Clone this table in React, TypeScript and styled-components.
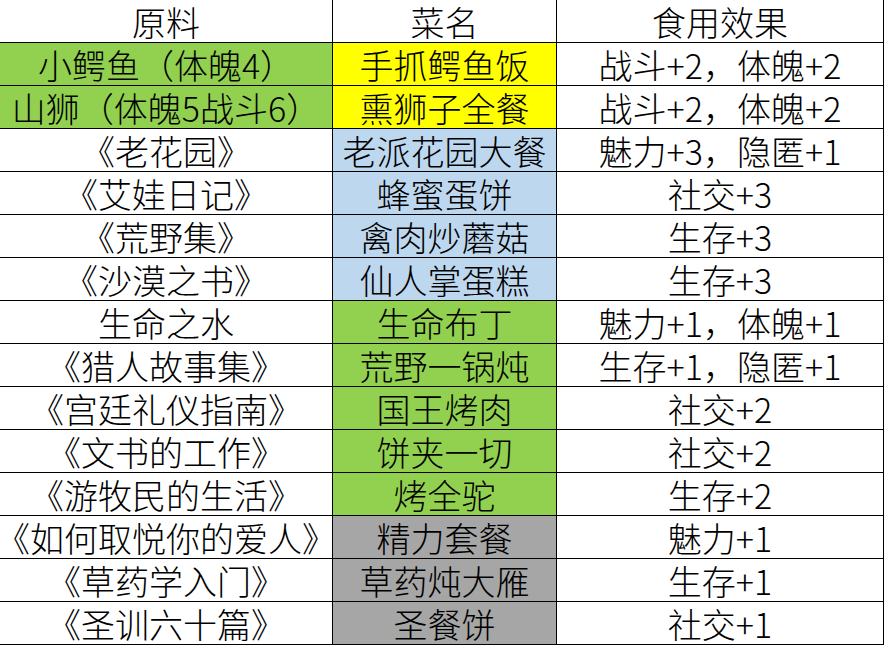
import styled, { createGlobalStyle } from "styled-components";

const GlobalStyle = createGlobalStyle`
  html, body {
    margin: 0;
    padding: 0;
    background: #fff;
    overflow: hidden;
  }
`;

type Tone = "none" | "green" | "yellow" | "blue" | "gray";

const tones: Record<Tone, string> = {
  none: "#ffffff",
  green: "#92d050",
  yellow: "#ffff00",
  blue: "#bdd7ee",
  gray: "#a6a6a6",
};

const Sheet = styled.div`
  display: grid;
  grid-template-columns: 333px 224px 327px;
  grid-auto-rows: 43px;
  width: 884px;
  font-family: "Noto Sans CJK SC", "Noto Sans", sans-serif;
  font-size: 34px;
  font-weight: 300;
  color: #000;
`;

const Cell = styled.div<{ $tone?: Tone }>`
  box-sizing: border-box;
  display: flex;
  align-items: center;
  justify-content: center;
  padding-top: 2px;
  white-space: nowrap;
  border-right: 1px solid #000;
  border-bottom: 1px solid #000;
  background: ${(p) => tones[p.$tone ?? "none"]};
  line-height: 1;
`;

const rows: [string, Tone, string, Tone, string][] = [
  ["小鳄鱼（体魄4）", "green", "手抓鳄鱼饭", "yellow", "战斗+2，体魄+2"],
  ["山狮（体魄5战斗6）", "green", "熏狮子全餐", "yellow", "战斗+2，体魄+2"],
  ["《老花园》", "none", "老派花园大餐", "blue", "魅力+3，隐匿+1"],
  ["《艾娃日记》", "none", "蜂蜜蛋饼", "blue", "社交+3"],
  ["《荒野集》", "none", "禽肉炒蘑菇", "blue", "生存+3"],
  ["《沙漠之书》", "none", "仙人掌蛋糕", "blue", "生存+3"],
  ["生命之水", "none", "生命布丁", "green", "魅力+1，体魄+1"],
  ["《猎人故事集》", "none", "荒野一锅炖", "green", "生存+1，隐匿+1"],
  ["《宫廷礼仪指南》", "none", "国王烤肉", "green", "社交+2"],
  ["《文书的工作》", "none", "饼夹一切", "green", "社交+2"],
  ["《游牧民的生活》", "none", "烤全驼", "green", "生存+2"],
  ["《如何取悦你的爱人》", "none", "精力套餐", "gray", "魅力+1"],
  ["《草药学入门》", "none", "草药炖大雁", "gray", "生存+1"],
  ["《圣训六十篇》", "none", "圣餐饼", "gray", "社交+1"],
];

export default function App() {
  return (
    <>
      <GlobalStyle />
      <Sheet>
        <Cell>原料</Cell>
        <Cell>菜名</Cell>
        <Cell>食用效果</Cell>
        {rows.map(([source, sourceTone, dish, dishTone, effect], i) => (
          <>
            <Cell key={`s${i}`} $tone={sourceTone}>
              {source}
            </Cell>
            <Cell key={`d${i}`} $tone={dishTone}>
              {dish}
            </Cell>
            <Cell key={`e${i}`}>{effect}</Cell>
          </>
        ))}
      </Sheet>
    </>
  );
}
